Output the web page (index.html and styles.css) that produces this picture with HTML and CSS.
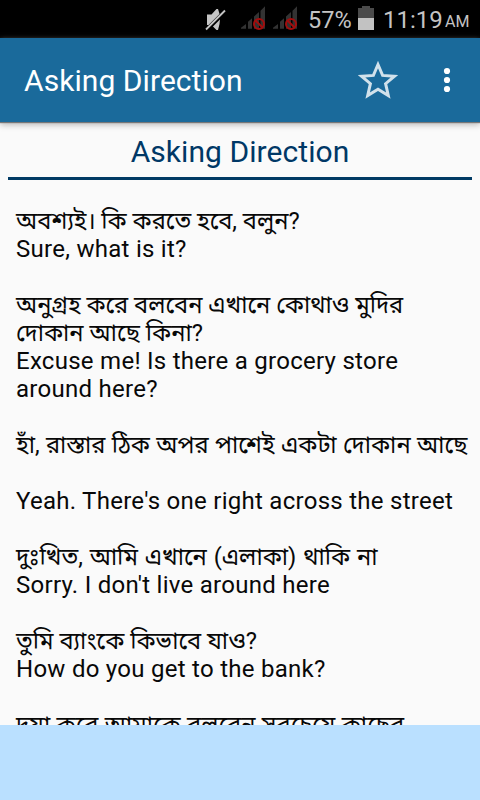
FILE: index.html
```
<!DOCTYPE html>
<html lang="bn">
<head>
<meta charset="utf-8">
<title>Asking Direction</title>
<link rel="stylesheet" href="styles.css">
</head>
<body>
<div class="status">
<svg class="system-icons" width="112" height="38" viewBox="0 0 112 38">
<path fill="#c5c5c5" d="M7 14.500h4.500l5-5.500h1.500q4 9 0 21h-1.500l-5-5H7z"/>
<path stroke="#000" stroke-width="4" d="M6 30.500L25 11.500"/>
<path stroke="#c5c5c5" stroke-width="1.800" d="M6 29.500L25 10.500"/>
<g id="signal"><path fill="#333" d="M41 28.800v-1l5-3.800v4.800zM48 28.800v-7l4-3.500v10.500zM54 28.800V16.500l5-4.500v16.800zM60.500 28.800v-18l4.500-4.600v22.600z"/><circle cx="59" cy="24" r="5" fill="none" stroke="#a30d0d" stroke-width="2"/><path stroke="#a30d0d" stroke-width="2" d="M55.500 20.500l7 7"/></g>
<use href="#signal" x="32"/>
</svg>
<span class="percent">57%</span>
<svg class="battery" width="16" height="38" viewBox="0 0 16 38"><path fill="#4b4b4b" d="M0 8h4V6h8v2h4v10H0z"/><path fill="#c2c2c2" d="M0 18h16v12H0z"/></svg>
<span class="clock">11:19</span><span class="meridiem">AM</span>
</div>
<header class="bar">
<h1>Asking Direction</h1>
<svg class="star" width="40" height="40" viewBox="0 0 40 40"><path fill="none" stroke="#d1e1eb" stroke-width="3" d="M20 4.500L24.600 15.400L36.500 16.200L27.600 23.700L30.300 35.500L20 29.200L9.700 35.500L12.400 23.700L3.500 16.200L15.400 15.400Z"/></svg>
<svg class="more" width="8" height="28" viewBox="0 0 8 28"><circle cx="4" cy="5" r="3.100"/><circle cx="4" cy="14" r="3.100"/><circle cx="4" cy="23" r="3.100"/></svg>
</header>
<main class="content">
<h2>Asking Direction</h2>
<div class="phrases">
<p><span class="line bengali">অবশ্যই। কি করতে হবে, বলুন?</span><span class="line">Sure, what is it?</span></p>
<p><span class="line bengali">অনুগ্রহ করে বলবেন এখানে কোথাও মুদির</span><span class="line bengali">দোকান আছে কিনা?</span><span class="line">Excuse me! Is there a grocery store</span><span class="line">around here?</span></p>
<p><span class="line bengali spaced">হাঁ, রাস্তার ঠিক অপর পাশেই একটা দোকান আছে</span></p>
<p><span class="line">Yeah. There's one right across the street</span></p>
<p><span class="line bengali wide">দুঃখিত, আমি এখানে (এলাকা) থাকি না</span><span class="line">Sorry. I don't live around here</span></p>
<p><span class="line bengali">তুমি ব্যাংকে কিভাবে যাও?</span><span class="line">How do you get to the bank?</span></p>
<p><span class="line bengali spaced">দয়া করে আমাকে বলবেন সবচেয়ে কাছের</span></p>
</div>
</main>
<footer class="banner"></footer>
</body>
</html>
```
FILE: styles.css
```
* { box-sizing: border-box; }
body { margin: 0; width: 480px; height: 800px; overflow: hidden; display: flex; flex-direction: column; background: #fafafa; font-family: Roboto, "Noto Sans Bengali", sans-serif; color: #080808; }
h1, h2, p { margin: 0; font-weight: 400; }
.status { height: 38px; flex: none; background: #000; color: #c4c4c4; display: flex; align-items: flex-start; padding-left: 200px; line-height: 40px; font-size: 24px; white-space: nowrap; }
.system-icons { flex: none; }
.percent { width: 46px; margin-left: -4px; font-size: 23.500px; }
.battery { margin-left: 4px; flex: none; }
.clock { margin-left: 9px; width: 62px; }
.meridiem { font-size: 16px; line-height: 44px; }
.bar { height: 84px; flex: none; display: flex; align-items: center; background: #1a6a9b; color: #fff; padding-left: 24px; box-shadow: 0 1px 1px #777, 0 3px 6px #bbb; z-index: 1; }
h1 { width: 334px; font-size: 30px; line-height: 40px; padding-top: 1px; letter-spacing: 0.060px; white-space: nowrap; }
.more { margin-left: 45px; fill: #fff; }
.content { flex: 1; min-height: 0; overflow: hidden; padding: 0 8px; }
h2 { height: 58px; border-bottom: 3px solid #003a64; text-align: center; font-size: 30px; letter-spacing: 0.060px; line-height: 59px; color: #003866; }
.phrases { padding: 27px 8px 0; font-size: 24px; letter-spacing: 0.270px; line-height: 28px; white-space: nowrap; }
.phrases p { margin-bottom: 28px; }
.line { display: block; height: 28px; }
.bengali { font-size: 23.700px; letter-spacing: 0; }
.spaced { word-spacing: 0.500px; }
.wide { word-spacing: 0.950px; }
.banner { height: 75px; flex: none; background: #bae0ff; }
```
